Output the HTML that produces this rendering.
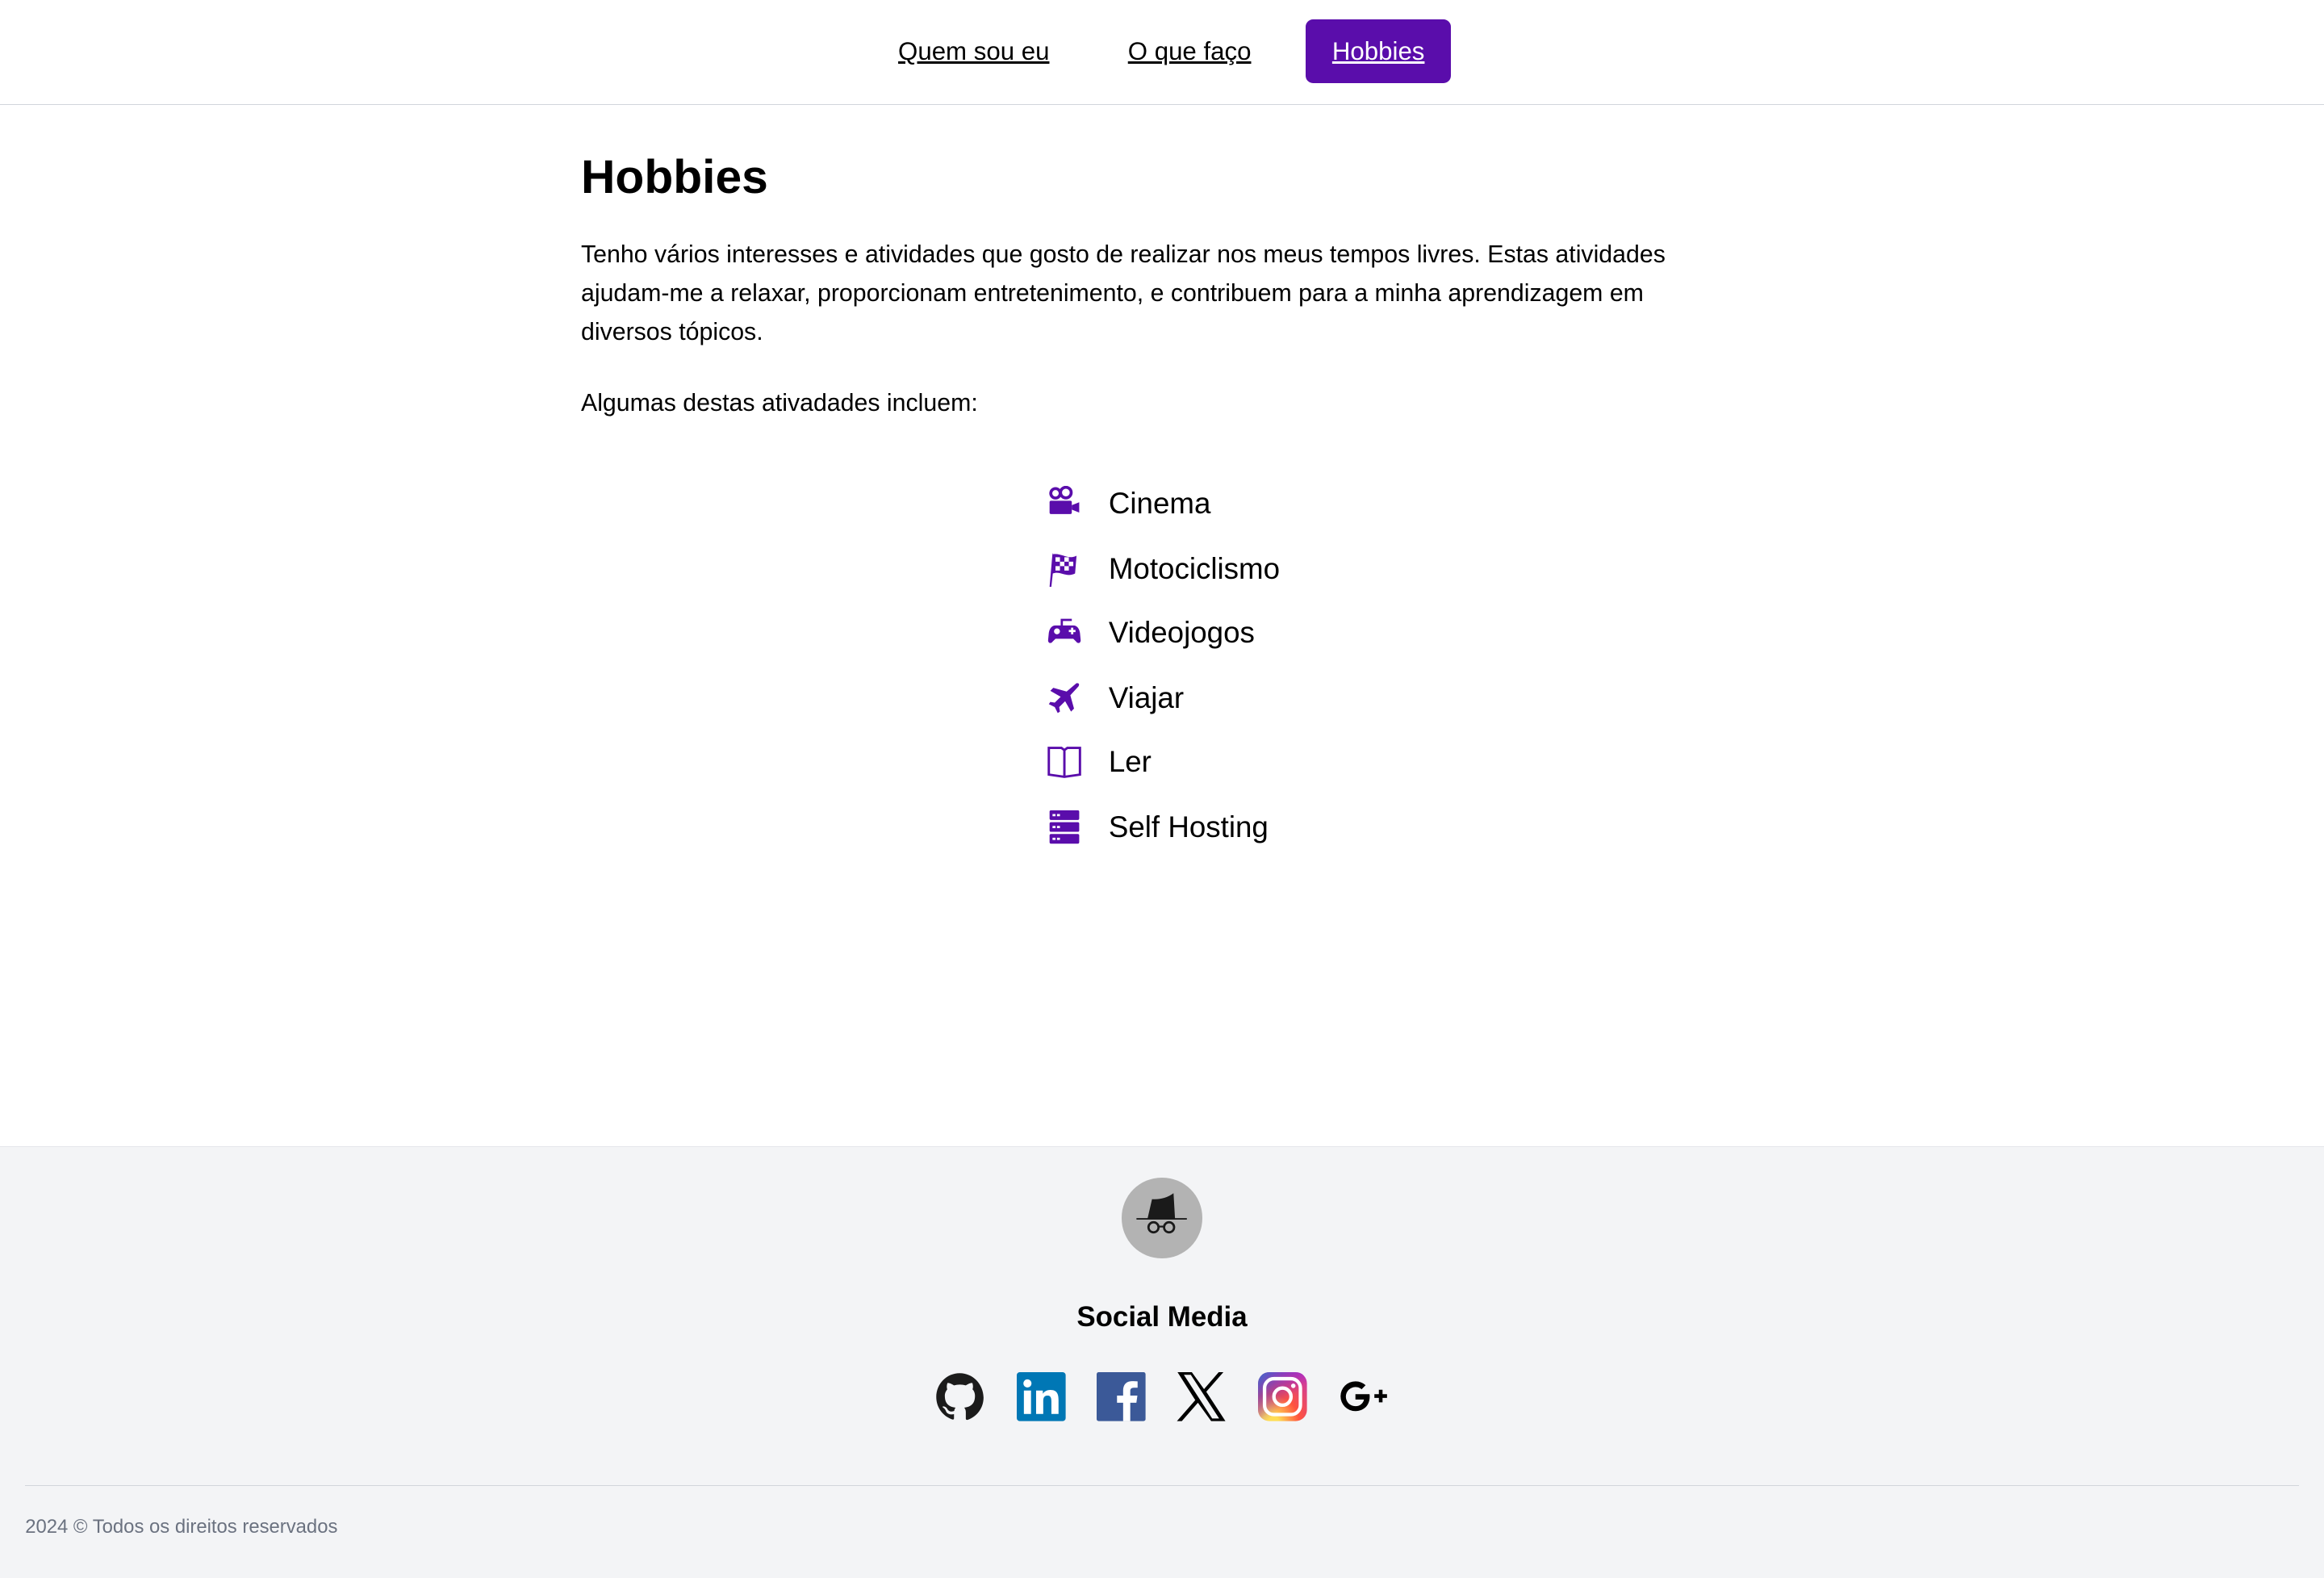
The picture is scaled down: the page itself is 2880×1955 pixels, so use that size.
<!DOCTYPE html>
<html><head><meta charset="utf-8"><style>
html{zoom:1.83673}
body{margin:0;width:1568px;height:1064px;font-family:"Liberation Sans",sans-serif;color:#000;background:#fff;position:relative;overflow:hidden}
.a{position:absolute;white-space:nowrap}
nav{position:absolute;left:0;top:0;width:1568px;height:70px;border-bottom:1px solid #d1d5db}
nav a{color:#000;text-decoration:underline;font-size:17px;position:absolute;top:25px}
.btn{position:absolute;left:881px;top:13px;width:98px;height:43px;background:#5a0dab;border-radius:5px;color:#fff;font-size:17px;text-align:center;line-height:44px;text-decoration:underline}
h1{position:absolute;left:392px;top:101px;margin:0;font-size:32px;font-weight:bold}
p{margin:0;font-size:16.5px;line-height:26px}
.li{position:absolute;left:706px;height:24px;display:flex;align-items:center}
.li svg{width:24px;height:24px;fill:#5a0dab}
.li span{margin-left:18px;font-size:20px}
footer{position:absolute;left:0;top:773px;width:1568px;height:291px;background:#f3f4f6;border-top:1px solid #e5e7eb}
.soc svg{position:absolute;top:152px;width:33px;height:33px}
</style></head><body>
<nav>
<a style="left:606px">Quem sou eu</a>
<a style="left:761px">O que faço</a>
<div class="btn">Hobbies</div>
</nav>
<h1>Hobbies</h1>
<div class="a" style="left:392px;top:159px;width:768px;white-space:normal"><p>Tenho vários interesses e atividades que gosto de realizar nos meus tempos livres. Estas atividades ajudam-me a relaxar, proporcionam entretenimento, e contribuem para a minha aprendizagem em diversos tópicos.</p></div>
<div class="a" style="left:392px;top:259px"><p>Algumas destas ativadades incluem:</p></div>

<div class="li" style="top:328px"><svg viewBox="0 0 24 24"><circle cx="6" cy="5" r="3.2" fill="none" stroke="#5a0dab" stroke-width="2"/><circle cx="13" cy="4.5" r="3.6" fill="none" stroke="#5a0dab" stroke-width="2"/><rect x="2" y="10" width="15" height="9" rx="1"/><path d="M17 13l5-2v7l-5-2z"/></svg><span>Cinema</span></div>
<div class="li" style="top:372px"><svg viewBox="0 0 24 24"><path d="M4 1l-2 23h1.2l1-9c5-2 9 3 15 0l1-12c-6 3-10-2-16-1z"/><path fill="#fff" d="M6 4h3v3H6zM12 4h3v3h-3zM9 7h3v3H9zM15 7h3v3h-3zM6 10h3v3H6zM12 10h3v3h-3z"/></svg><span>Motociclismo</span></div>
<div class="li" style="top:415px"><svg viewBox="0 0 24 24"><path d="M11 7V4h6V2.5h-7.5V7H6c-2.5 0-4 2-4.5 5L1 17c0 2 2 2.5 3 1l2-2h12l2 2c1 1.5 3 1 3-1l-.5-5C22 9 20.5 7 18 7z"/><circle cx="7" cy="11" r="2" fill="#fff"/><path fill="#fff" d="M15 10h1.5V8.5h1.5V10H19.5v1.5H18V13h-1.5v-1.5H15z"/></svg><span>Videojogos</span></div>
<div class="li" style="top:459px"><svg viewBox="0 0 24 24"><path d="M20 2c1.5-.5 2.5.5 1.5 2L16 10l2.5 9-2 2-4-7-4 4 .5 3-1.5 1-2-4-4-2 1-1.5 3 .5 4-4-7-4 2-2 9 2.5z"/></svg><span>Viajar</span></div>
<div class="li" style="top:502px"><svg viewBox="0 0 24 24"><path d="M1.5 2.5h8.5l2 1.5 2-1.5h8.5v18l-10.5 1.5-10.5-1.5z" fill="none" stroke="#5a0dab" stroke-width="1.6"/><path d="M12 4v18" stroke="#5a0dab" stroke-width="1.6"/></svg><span>Ler</span></div>
<div class="li" style="top:546px"><svg viewBox="0 0 24 24"><rect x="2" y="0.5" width="20" height="6.5" rx="1"/><rect x="2" y="8.5" width="20" height="6.5" rx="1"/><rect x="2" y="16.5" width="20" height="6.5" rx="1"/><path fill="#fff" d="M4 3h2v1.5H4zM7 3h2v1.5H7zM4 11h2v1.5H4zM7 11h2v1.5H7zM4 19h2v1.5H4zM7 19h2v1.5H7z"/></svg><span>Self Hosting</span></div>

<footer>
<div class="a" style="left:757px;top:21px;width:54px;height:54px;border-radius:50%;background:#b3b3b3"></div>
<svg class="a" style="left:757px;top:21px" width="54" height="54" viewBox="0 0 54 54"><path d="M17.5 27.5L20.5 14.5Q29 15 35 10.5L36 27.5z" fill="#1a1a1a"/><rect x="10" y="27.3" width="34" height="1" fill="#1a1a1a"/><circle cx="21.5" cy="33.5" r="3.4" fill="none" stroke="#1a1a1a" stroke-width="1.5"/><circle cx="32" cy="33.5" r="3.4" fill="none" stroke="#1a1a1a" stroke-width="1.5"/><path d="M24.9 33h3.7" stroke="#1a1a1a" stroke-width="1.2"/></svg>
<div class="a" style="left:0;width:1568px;text-align:center;top:104px;font-size:19px;font-weight:bold">Social Media</div>
<div class="soc">
<svg style="left:631px" viewBox="0 0 24 24"><path fill="#1b1b1b" d="M12 .5C5.6.5.5 5.7.5 12.2c0 5.2 3.3 9.5 7.9 11 .6.1.8-.2.8-.6v-2c-3.2.7-3.9-1.4-3.9-1.4-.5-1.4-1.3-1.7-1.3-1.7-1-.7.1-.7.1-.7 1.2.1 1.8 1.2 1.8 1.2 1 1.8 2.7 1.3 3.4 1 .1-.8.4-1.3.7-1.6-2.6-.3-5.3-1.3-5.3-5.8 0-1.3.5-2.3 1.2-3.2-.1-.3-.5-1.5.1-3.1 0 0 1-.3 3.2 1.2a11 11 0 0 1 5.8 0c2.2-1.5 3.2-1.2 3.2-1.2.6 1.6.2 2.8.1 3.1.8.8 1.2 1.9 1.2 3.2 0 4.5-2.7 5.5-5.3 5.8.4.4.8 1.1.8 2.2v3.2c0 .3.2.7.8.6 4.6-1.5 7.9-5.8 7.9-11C23.5 5.7 18.4.5 12 .5z"/></svg>
<svg style="left:686px" viewBox="0 0 24 24"><rect x="0" y="0" width="24" height="24" rx="1.5" fill="#0077b5"/><rect x="3.5" y="9" width="3.5" height="11.5" fill="#fff"/><circle cx="5.25" cy="5.5" r="2" fill="#fff"/><path fill="#fff" d="M9.5 9h3.3v1.6c.6-1 1.8-1.9 3.7-1.9 3.4 0 4 2.2 4 5.1v6.7h-3.5v-6c0-1.4-.1-3-1.9-3-1.9 0-2.1 1.4-2.1 2.9v6.1H9.5z"/></svg>
<svg style="left:740px" viewBox="0 0 24 24"><rect width="24" height="24" rx="1" fill="#3b5998"/><path fill="#fff" d="M16.5 24v-9h3l.5-3.5h-3.5V9.3c0-1 .3-1.7 1.8-1.7h1.8V4.5c-.3 0-1.4-.1-2.7-.1-2.7 0-4.4 1.6-4.4 4.6v2.5H10V15h3v9z"/></svg>
<svg style="left:794px" viewBox="0 0 24 24"><path fill="#000" d="M.5 0h7l6 8.3L20.7 0H23l-8.4 9.6L24 24h-7l-6.5-9L2.6 24H.2l9-10.3zM3.6 1.3l13.9 21.4h3.4L7 1.3z"/></svg>
<svg style="left:849px" viewBox="0 0 24 24"><defs><radialGradient id="ig" cx="0.25" cy="1.05" r="1.2"><stop offset="0" stop-color="#fd5"/><stop offset=".15" stop-color="#fd5"/><stop offset=".5" stop-color="#ff543e"/><stop offset="1" stop-color="#c837ab"/></radialGradient><linearGradient id="ig2" x1="0" y1="0" x2=".6" y2=".6"><stop offset="0" stop-color="#3771c8"/><stop offset="1" stop-color="#60f" stop-opacity="0"/></linearGradient></defs><rect width="24" height="24" rx="5.5" fill="url(#ig)"/><rect width="24" height="24" rx="5.5" fill="url(#ig2)"/><rect x="3.2" y="3.2" width="17.6" height="17.6" rx="4.6" fill="none" stroke="#fff" stroke-width="1.7"/><circle cx="12" cy="12" r="4.2" fill="none" stroke="#fff" stroke-width="1.7"/><circle cx="17.3" cy="6.7" r="1.1" fill="#fff"/></svg>
<svg style="left:903px" viewBox="0 0 24 24"><path fill="#000" d="M8.2 10.8v2.6h4.2c-.3 1.6-1.7 3.3-4.2 3.3a4.7 4.7 0 0 1 0-9.4c1.4 0 2.4.6 3 1.1l2-2A7.4 7.4 0 0 0 8.2 4.5a7.3 7.3 0 1 0 0 14.6c4.2 0 7-2.9 7-7.1 0-.5 0-.9-.1-1.2zM21.5 10.8v-2.2h-1.8v2.2h-2.2v1.8h2.2v2.2h1.8v-2.2h2.2v-1.8z"/></svg>
</div>
<div class="a" style="left:17px;top:228px;width:1534px;height:1px;background:#d1d5db"></div>
<div class="a" style="left:17px;top:249px;font-size:13px;color:#6b7280">2024 © Todos os direitos reservados</div>
</footer>
</body></html>
